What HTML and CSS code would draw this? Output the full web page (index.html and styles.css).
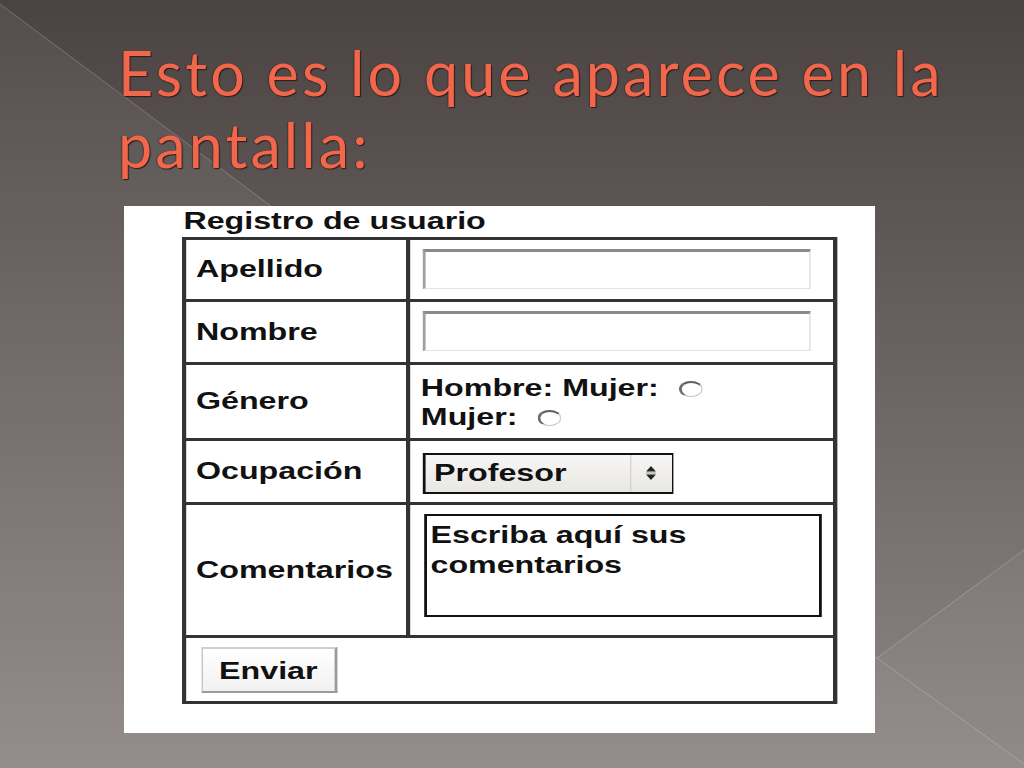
FILE: index.html
```html
<!DOCTYPE html>
<html lang="es">
<head>
<meta charset="utf-8">
<title>Esto es lo que aparece en la pantalla</title>
<link rel="stylesheet" href="styles.css">
</head>
<body>
<svg class="bg" viewBox="0 0 1024 768" width="1024" height="768" aria-hidden="true">
  <defs>
    <linearGradient id="bgGrad" x1="0" y1="0" x2="0" y2="1">
      <stop offset="0" stop-color="#4a4342"/>
      <stop offset="1" stop-color="#8e8685"/>
    </linearGradient>
  </defs>
  <rect width="1024" height="768" fill="url(#bgGrad)"/>
  <polygon points="0,4 877,658 1024,764 1024,768 0,768" fill="#ffffff" fill-opacity="0.06"/>
  <polygon points="877,658 1024,550 1024,764" fill="#ffffff" fill-opacity="0.04"/>
  <polyline points="0,4 877,658 1024,764" fill="none" stroke="#ffffff" stroke-opacity="0.22" stroke-width="1"/>
  <line x1="877" y1="658" x2="1024" y2="550" stroke="#ffffff" stroke-opacity="0.22" stroke-width="1"/>
</svg>
<main class="slide">
  <h1 class="title">Esto es lo que aparece en la<br>pantalla:</h1>
  <section class="card">
    <div class="form-scale">
      <div class="form-title">Registro de usuario</div>
      <div class="grid">
        <div class="cell label">Apellido</div>
        <div class="cell field"><span class="text-input"></span></div>

        <div class="cell label">Nombre</div>
        <div class="cell field"><span class="text-input"></span></div>

        <div class="cell label">Género</div>
        <div class="cell field radios">
          <div class="radio-line">Hombre: Mujer: <span class="radio"></span></div>
          <div class="radio-line">Mujer: <span class="radio"></span></div>
        </div>

        <div class="cell label">Ocupación</div>
        <div class="cell field sel">
          <div class="select-box">
            <span class="select-text">Profesor</span>
            <span class="select-arrows">
              <svg width="8" height="18" viewBox="0 0 8 18"><polygon points="0.5,7.5 4,2 7.5,7.5" fill="#222"/><rect x="0.5" y="8.5" width="7" height="1" fill="#999"/><polygon points="0.5,10.5 4,16 7.5,10.5" fill="#222"/></svg>
            </span>
          </div>
        </div>

        <div class="cell label">Comentarios</div>
        <div class="cell field area">
          <div class="textarea">Escriba aquí sus comentarios</div>
        </div>

        <div class="cell full">
          <span class="button">Enviar</span>
        </div>
      </div>
    </div>
  </section>
</main>
</body>
</html>
```
FILE: styles.css
```css
html, body {
  margin: 0;
  padding: 0;
}
body {
  width: 1024px;
  height: 768px;
  overflow: hidden;
  background: #6b6463;
  font-family: "Liberation Sans", Arial, sans-serif;
}
.bg {
  position: absolute;
  top: 0;
  left: 0;
  display: block;
}
.slide {
  position: relative;
  display: flex;
  flex-direction: column;
}
.title {
  margin: 37px 0 0 118px;
  font-family: "Lato", "Open Sans", sans-serif;
  font-weight: 400;
  font-size: 61px;
  line-height: 72px;
  letter-spacing: 3.1px;
  color: #f2664b;
  text-shadow: 1px 1px 1px #2a1d1b, -1px 0 1px rgba(40, 25, 22, 0.45);
}
.card {
  margin: 25px 0 0 124px;
  width: 693px;
  height: 525px;
  padding: 2px 0 0 58px;
  background: #ffffff;
}
.form-scale {
  width: 468px;
  transform: scaleX(1.4);
  transform-origin: 0 0;
  color: #111;
  font-weight: 700;
  font-size: 23px;
}
.form-title {
  line-height: 26px;
  margin: 0 0 3px 1px;
  white-space: nowrap;
}
.grid {
  display: grid;
  grid-template-columns: 157px 302px;
  grid-template-rows: 59px 60px 73px 61px 130px 63px;
  gap: 3px;
  border: 3px solid #333;
  background: #333;
}
.cell {
  background: #fff;
  display: flex;
  white-space: nowrap;
}
.label {
  align-items: center;
  padding-left: 7px;
}
.field {
  align-items: flex-start;
  padding: 9px 0 0 9px;
}
.text-input {
  display: block;
  box-sizing: border-box;
  width: 277px;
  height: 40px;
  border-style: solid;
  border-width: 3px 1px 1px 2px;
  border-color: #8a8a8a #dcdcdc #e4e4e4 #a0a0a0;
  background: #fff;
}
.radios {
  flex-direction: column;
  padding: 9px 0 0 7.6px;
}
.radio-line {
  line-height: 28.5px;
}
.radio {
  display: inline-block;
  box-sizing: border-box;
  width: 17px;
  height: 16px;
  margin-left: 8px;
  border-radius: 50%;
  border-style: solid;
  border-width: 2.5px 1.5px 1.5px 2.5px;
  border-color: #5e5e5e #d0d0d0 #c4c4c4 #6e6e6e;
  background: #fff;
  vertical-align: -1px;
}
.sel {
  padding-top: 11.7px;
}
.select-box {
  box-sizing: border-box;
  width: 179px;
  height: 41px;
  display: flex;
  align-items: center;
  border-style: solid;
  border-color: #111;
  border-width: 2px 1.7px 2px 2.8px;
  background: linear-gradient(#f7f6f4, #e9e7e4);
}
.select-text {
  width: 140px;
  padding-left: 6px;
  line-height: 36px;
}
.select-arrows {
  align-self: stretch;
  display: flex;
  align-items: center;
  padding-left: 10px;
  border-left: 1px solid #d6d4d1;
}
.select-arrows svg {
  display: block;
}
.area {
  padding-top: 9.3px;
  padding-left: 9.5px;
}
.textarea {
  box-sizing: border-box;
  width: 284px;
  height: 103px;
  border-style: solid;
  border-color: #111;
  border-width: 2px 2px 2px 2.5px;
  padding: 4px 0 0 3px;
  line-height: 30px;
  white-space: normal;
  background: #fff;
}
.full {
  grid-column: 1 / span 2;
  align-items: flex-start;
  padding: 8.7px 0 0 10.7px;
}
.button {
  box-sizing: border-box;
  width: 97px;
  height: 46px;
  display: flex;
  align-items: center;
  justify-content: center;
  border-style: solid;
  border-width: 2px 2.5px 2.5px 1.5px;
  border-color: #cfcfcf #9a9a9a #9a9a9a #c4c4c4;
  background: linear-gradient(#ffffff, #f1f1f1);
  line-height: 26px;
  padding-top: 2px;
}
```
